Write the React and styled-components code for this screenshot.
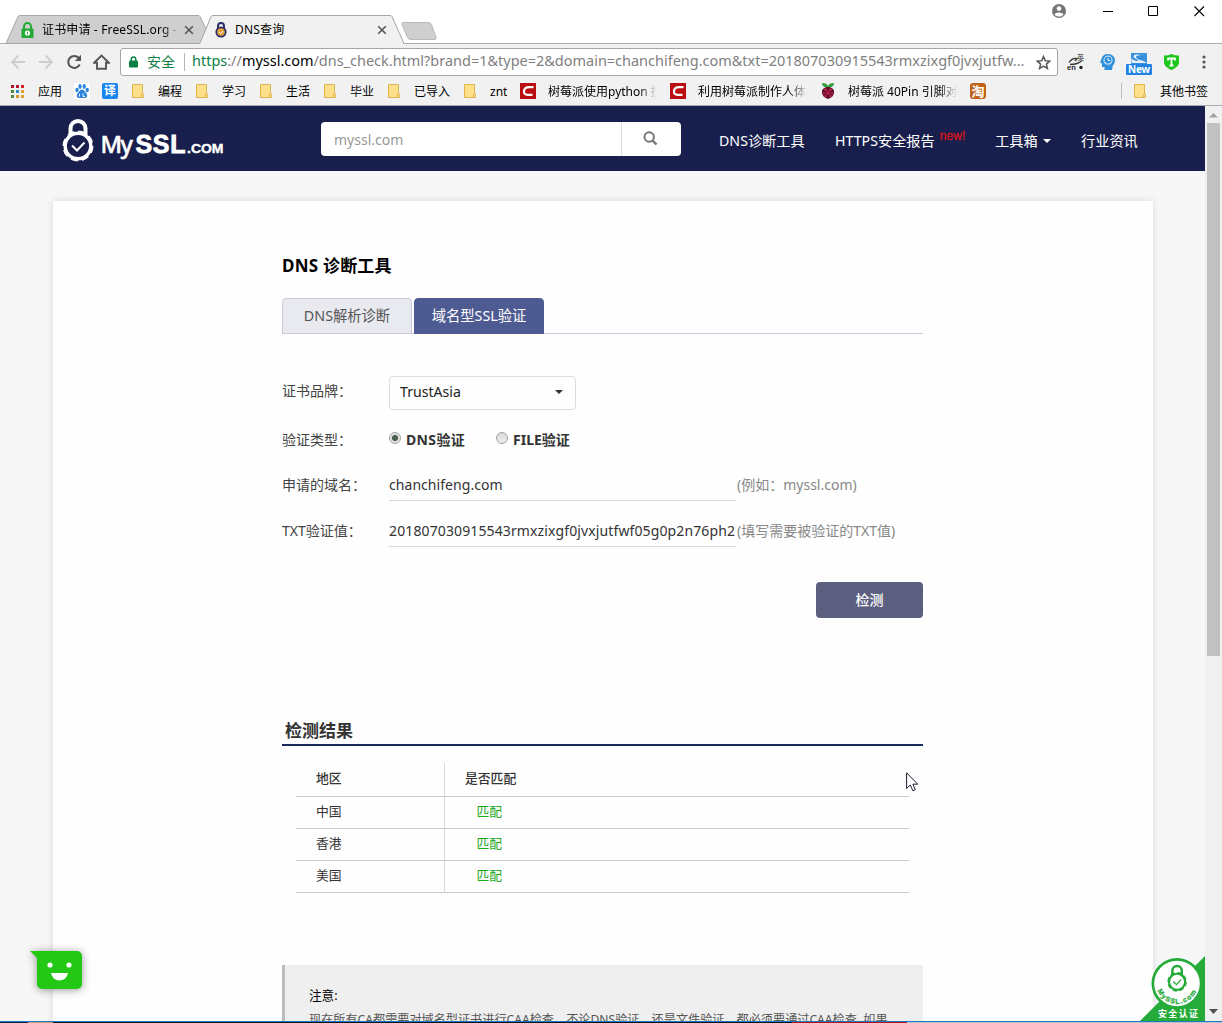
import React from "react";
import styled, { createGlobalStyle } from "styled-components";

const SANS = '"Noto Sans", "Noto Sans CJK SC", sans-serif';

const Global = createGlobalStyle`
  * { box-sizing: border-box; }
  body { margin: 0; overflow: hidden; font-family: ${SANS}; }
`;

/* ---------- window ---------- */
const Window = styled.div`
  width: 1222px;
  height: 1023px;
  display: flex;
  flex-direction: column;
  overflow: hidden;
  background: #fff;
  color: #333;
`;
const TabStrip = styled.div`
  height: 44px;
  flex: none;
  display: flex;
  align-items: flex-end;
  padding-left: 5px;
  border-bottom: 1px solid #b0b0b0;
`;
const BrowserTab = styled.div`
  position: relative;
  z-index: ${(p) => (p.$active ? 1 : 0)};
  width: ${(p) => p.$w}px;
  height: 29px;
  flex: none;
  margin: 0 0 -1px ${(p) => p.$shift || 0}px;
  padding: 1px ${(p) => (p.$active ? 18 : 14)}px 0 16px;
  display: flex;
  align-items: center;
`;
const TabShape = styled.svg`
  position: absolute;
  inset: 0;
  z-index: -1;
`;
const TabTitle = styled.div`
  flex: 1;
  min-width: 0;
  height: 18px;
  margin: 0 5px 0 8px;
  overflow: hidden;
  white-space: nowrap;
  font-size: 12px;
  line-height: 18px;
  letter-spacing: ${(p) => p.$ls || 0}px;
  color: #000;
  mask-image: ${(p) => (p.$fade ? "linear-gradient(90deg,#000 88%,transparent)" : "none")};
`;
const NewTab = styled.svg`
  flex: none;
  margin: 0 0 2px -5px;
`;
const WindowButtons = styled.div`
  margin-left: auto;
  align-self: flex-start;
  display: flex;
  align-items: center;
  height: 22px;
  padding-right: 17px;
`;
const WinIcon = styled.svg`
  flex: none;
  margin-left: ${(p) => p.$ml}px;
`;

const Toolbar = styled.div`
  height: 36px;
  flex: none;
  display: flex;
  align-items: center;
  background: #f1f1f1;
  padding-left: 10px;
`;
const ToolIcon = styled.svg`
  flex: none;
  margin-right: ${(p) => p.$mr}px;
`;
const Omnibox = styled.div`
  width: 938px;
  height: 28px;
  flex: none;
  display: flex;
  align-items: center;
  padding: 0 6px 0 8px;
  border: 1px solid #a5a5a5;
  border-radius: 3px;
  background: #fff;
`;
const Secure = styled.span`
  width: 37px;
  height: 18px;
  margin-left: 9px;
  border-right: 1px solid #b5b5b5;
  box-sizing: content-box;
  font-size: 14px;
  line-height: 17px;
  color: #0b8043;
`;
const Url = styled.span`
  flex: 1;
  margin-left: 7px;
  white-space: nowrap;
  overflow: hidden;
  font-size: 14.48px;
  line-height: 22px;
  padding-bottom: 2px;
  color: #808080;
`;
const UrlScheme = styled.span`color: #0b8043;`;
const UrlHost = styled.span`color: #000;`;
const Extensions = styled.div`
  display: flex;
  align-items: center;
  margin-left: 9px;
`;

const BookmarkBar = styled.div`
  height: 26px;
  flex: none;
  display: flex;
  align-items: center;
  padding: 0 0 3px 11px;
  border-bottom: 1px solid #a9a9b4;
  background: #f1f1f1;
`;
const Bookmark = styled.div`
  width: ${(p) => p.$w}px;
  height: 20px;
  flex: none;
  display: flex;
  align-items: center;
`;
const BookmarkText = styled.span`
  width: ${(p) => (p.$fade ? "109px" : "auto")};
  margin-left: ${(p) => p.$gap}px;
  padding-top: 2px;
  overflow: hidden;
  white-space: nowrap;
  font-size: 12px;
  line-height: 18px;
  color: #000;
  mask-image: ${(p) => (p.$fade ? "linear-gradient(90deg,#000 84%,transparent)" : "none")};
`;
const OtherBookmarks = styled.div`
  margin-left: auto;
  width: 101px;
  height: 16px;
  display: flex;
  align-items: center;
  padding-left: 12px;
  border-left: 1px solid #bbb;
`;
const TileIcon = styled.span`
  width: 16px;
  height: 16px;
  flex: none;
  display: flex;
  align-items: center;
  justify-content: center;
  border-radius: ${(p) => p.$r || 0}px;
  background: ${(p) => p.$bg};
  color: #fff;
  font-size: ${(p) => p.$fs || 12}px;
  font-weight: 700;
  line-height: 16px;
`;

/* ---------- page ---------- */
const Viewport = styled.div`
  position: relative;
  height: 915px;
  flex: none;
  display: flex;
  overflow: hidden;
`;
const Page = styled.div`
  width: 1205px;
  display: flex;
  flex-direction: column;
  background: #f7f7f7;
`;
const Header = styled.header`
  height: 65px;
  flex: none;
  display: flex;
  align-items: center;
  padding: 0 0 0 62px;
  background: #191f4c;
`;
const Logo = styled.svg`
  width: 164px;
  height: 46px;
  flex: none;
  margin-top: 3px;
`;
const Search = styled.div`
  width: 360px;
  height: 34px;
  flex: none;
  display: flex;
  margin: 1px 38px 0 95px;
  border-radius: 4px;
  background: #fff;
`;
const SearchInput = styled.div`
  width: 301px;
  padding-left: 13px;
  border-right: 1px solid #ddd;
  font-size: 14px;
  line-height: 35px;
  color: #999;
`;
const SearchButton = styled.div`
  flex: 1;
  display: flex;
  align-items: center;
  justify-content: center;
  padding: 0 2px 2px 0;
`;
const NavItem = styled.a`
  width: ${(p) => p.$w}px;
  flex: none;
  display: flex;
  align-items: center;
  padding-top: 4px;
  white-space: nowrap;
  font-size: 14.2px;
  line-height: 20px;
  color: #fff;
`;
const NewFlag = styled.sup`
  margin: -10px 0 0 5px;
  font-family: "Liberation Sans", Arial, sans-serif;
  font-size: 12px;
  line-height: 12px;
  letter-spacing: 0.1px;
  color: #d9131b;
  -webkit-text-stroke: 0.3px #d9131b;
`;
const Caret = styled.span`
  margin-left: ${(p) => p.$ml || 0}px;
  border: 4px solid transparent;
  border-top-color: ${(p) => p.$c};
  border-bottom: 0;
`;
const Card = styled.main`
  width: 1100px;
  flex: 1;
  margin: 30px 0 0 53px;
  padding: 53px 230px 0 229px;
  display: flex;
  flex-direction: column;
  background: #fefefe;
  box-shadow: 0 0 8px rgba(0, 0, 0, 0.12);
`;
const Title = styled.h1`
  margin: 0 0 21px;
  height: 23px;
  font-size: 17px;
  font-weight: 700;
  line-height: 23px;
  letter-spacing: 0.22px;
  color: #000;
`;
const Tabs = styled.div`
  height: 36px;
  flex: none;
  display: flex;
  gap: 2px;
  border-bottom: 1px solid #c9cadc;
`;
const PageTab = styled.div`
  width: 130px;
  height: 36px;
  border: 1px solid ${(p) => (p.$active ? "#4e5b93" : "#c9cadc")};
  border-radius: 4px 4px 0 0;
  background: ${(p) => (p.$active ? "#4e5b93" : "#e9eaf0")};
  color: ${(p) => (p.$active ? "#fff" : "#555")};
  text-align: center;
  font-size: 14.3px;
  line-height: 34px;
`;
const FormRow = styled.div`
  height: ${(p) => p.$h}px;
  flex: none;
  display: flex;
  align-items: flex-start;
  margin-top: ${(p) => p.$mt || 0}px;
`;
const Label = styled.label`
  width: 107px;
  flex: none;
  font-size: 14px;
  line-height: 30px;
  white-space: nowrap;
  color: #444;
`;
const Select = styled.div`
  width: 187px;
  height: 34px;
  display: flex;
  align-items: center;
  justify-content: space-between;
  padding: 0 12px 3px 10px;
  border: 1px solid #ddd;
  border-radius: 4px;
  font-size: 14.1px;
  line-height: 20px;
  color: #222;
`;
const RadioLabel = styled.div`
  width: 107px;
  display: flex;
  align-items: center;
  white-space: nowrap;
  font-size: 14px;
  font-weight: 700;
  line-height: 30px;
  letter-spacing: ${(p) => p.$ls || 0}px;
  color: #333;
`;
const Radio = styled.span`
  width: 12px;
  height: 12px;
  flex: none;
  margin: -4px 5px 0 0;
  border: 1px solid #a2a2a2;
  border-radius: 50%;
  background: ${(p) =>
    p.$on
      ? "radial-gradient(circle, #4c6152 0 2.6px, #e4e4e4 3.6px)"
      : "linear-gradient(#dcdcdc, #ededed)"};
`;
const Input = styled.div`
  width: 347px;
  height: 31px;
  flex: none;
  border-bottom: 1px solid #d8d8d8;
  white-space: nowrap;
  font-size: 14px;
  line-height: 30px;
  letter-spacing: ${(p) => p.$ls || 0}px;
  color: #333;
`;
const Hint = styled.span`
  margin-left: 1px;
  white-space: nowrap;
  font-size: 14px;
  line-height: 30px;
  color: #888;
`;
const Submit = styled.div`
  width: 107px;
  height: 36px;
  flex: none;
  align-self: flex-end;
  margin-top: 35px;
  border-radius: 4px;
  background: #5d5f80;
  color: #fff;
  text-align: center;
  font-size: 14px;
  font-weight: 500;
  line-height: 36px;
`;
const ResultTitle = styled.h2`
  height: 30px;
  flex: none;
  margin: 98px 0 17px;
  padding-left: 3px;
  border-bottom: 2px solid #1a2c5b;
  font-size: 17px;
  font-weight: 700;
  line-height: 29px;
  color: #333;
`;
const Table = styled.div`
  width: 613px;
  flex: none;
  margin-left: 14px;
  display: flex;
  flex-direction: column;
`;
const Row = styled.div`
  height: ${(p) => (p.$head ? 34 : 32)}px;
  display: grid;
  grid-template-columns: 149px 1fr;
  border-bottom: 1px solid #c8c8c8;
  font-size: 12.8px;
  font-weight: ${(p) => (p.$head ? 500 : 400)};
  line-height: ${(p) => (p.$head ? 31 : 29)}px;
  color: #333;
`;
const Cell = styled.div`
  padding-left: ${(p) => p.$pl}px;
  margin-bottom: -1px;
  border-right: ${(p) => (p.$line ? "1px solid #d8d8d8" : "0")};
  color: ${(p) => (p.$ok ? "#1aa91a" : "inherit")};
`;
const Notice = styled.section`
  height: 120px;
  flex: none;
  margin-top: 72px;
  padding: 19px 0 0 24px;
  border-left: 3px solid #bbb;
  background: #efefef;
  line-height: 24px;
  white-space: nowrap;
  color: #555;
`;
const NoticeHead = styled.div`
  font-size: 12.6px;
  color: #000;
`;
const NoticeText = styled.div`
  font-size: 12.15px;
`;
const Scrollbar = styled.div`
  width: 17px;
  flex: none;
  display: flex;
  flex-direction: column;
  align-items: center;
  padding: 7px 0;
  background: #f0f0f0;
`;
const Thumb = styled.div`
  width: 13px;
  height: 533px;
  margin: 5px 0 auto;
  background: #c1c1c1;
`;
const Floating = styled.svg`
  position: absolute;
  left: ${(p) => p.$x}px;
  top: ${(p) => p.$y}px;
`;
const ChatBubble = styled.path`
  fill: #22c814;
  filter: drop-shadow(0 1px 4px rgba(0, 0, 0, 0.4));
`;
const Taskbar = styled.div`
  height: 2px;
  flex: none;
  border-top: 1px solid #1f79bf;
  background: linear-gradient(90deg, #10243c 0 28px, #c49a7c 28px 53px, #0a1320 53px 792px, #b3121a 792px 907px, #b9c3cc 907px);
`;

const PadlockSeal = ({ color }) => (
  <g fill="none" stroke={color}>
    <path d="M8.5 17V10a7.500 7.500 0 0 1 15 0v7" strokeWidth="4" />
    <circle cx="16" cy="27.500" r="12.800" strokeWidth="3.400" />
    <circle cx="16" cy="27.500" r="14.200" strokeWidth="2.600" strokeDasharray="7 4.150" />
    <path d="M10 27l5 5 7.500-8" strokeWidth="2" />
  </g>
);
const CloseIcon = () => (
  <svg width="10" height="10" viewBox="0 0 10 10">
    <path d="M1.200 1.200l7.600 7.600M8.800 1.200L1.200 8.800" stroke="#555" strokeWidth="1.600" />
  </svg>
);
const Folder = () => (
  <svg width="13" height="16" viewBox="0 0 13 16">
    <path d="M.5 1.500h10v9.500l1 .5v3H.5z" fill="#fee08b" stroke="#e2b44e" />
    <path d="M9.500 14v-2.500l2-.5" fill="none" stroke="#e2b44e" />
  </svg>
);
const CIcon = () => (
  <svg width="16" height="16" viewBox="0 0 16 16">
    <path fill="#b90f12" d="M0 0h16v16H0z" />
    <path d="M13.500 4.200H9C6 4.200 4.300 5.800 4 8c-.3 2.400 1 3.900 3.800 3.900H12.500" fill="none" stroke="#fff" strokeWidth="2.200" />
  </svg>
);
const BerryIcon = () => (
  <svg width="14" height="16" viewBox="0 0 14 16">
    <path d="M1 0c3 0 5 .6 6 3C8 .6 10 0 13 0c0 3-2 4.500-6 4.500S1 3 1 0z" fill="#2f9e3b" />
    <path d="M7 4c4 0 6.500 2.500 6 6-.5 3.500-3.500 5-6 6-2.500-1-5.500-2.500-6-6C.5 6.500 3 4 7 4z" fill="#5a0d25" />
    <g fill="#b8204c"><circle cx="4.600" cy="6.800" r="1.600" /><circle cx="9.400" cy="6.800" r="1.600" /><circle cx="7" cy="10" r="1.900" /><circle cx="2.800" cy="10.200" r="1.300" /><circle cx="11.200" cy="10.200" r="1.300" /><circle cx="4.600" cy="13" r="1.200" /><circle cx="9.400" cy="13" r="1.200" /></g>
  </svg>
);

const folders = [["编程", 64], ["学习", 64], ["生活", 64], ["毕业", 64], ["已导入", 76], ["znt", 56]];
const rows = ["中国", "香港", "美国"];

export default function App() {
  return (
    <Window>
      <Global />
      <TabStrip>
        <BrowserTab $w={203}>
          <TabShape width="203" height="29">
            <path d="M1 28.500L13 1.500Q13.500 .5 15 .5H193Q194.500 .5 195 1.500L202 16V28.500z" fill="#cfcfcf" stroke="#a6a6a6" />
          </TabShape>
          <svg width="13" height="16" viewBox="0 0 13 16">
            <path d="M3 7V4.500a3.500 3.500 0 0 1 7 0V7" fill="none" stroke="#23a936" strokeWidth="2" />
            <rect x=".5" y="6.500" width="12" height="9.500" fill="#23a936" />
            <circle cx="6.500" cy="11" r="2.600" fill="#fff" /><path d="M6.500 9.800v2.500" stroke="#23a936" />
          </svg>
          <TabTitle $fade $ls={0.15}>证书申请 - FreeSSL.org - </TabTitle>
          <CloseIcon />
        </BrowserTab>
        <BrowserTab $active $w={206} $shift={-9}>
          <TabShape width="206" height="29">
            <path d="M0 28.500Q1 28.500 1.500 27L12 1.500Q12.500 .5 14 .5H191Q192.500 .5 193 1.500L205 28.500" fill="#f1f1f1" stroke="#a6a6a6" />
            <path d="M1 28.500H204" stroke="#f1f1f1" />
          </TabShape>
          <svg width="12" height="16" viewBox="0 0 12 16">
            <path d="M3 7V4a3 3 0 0 1 6 0V7" fill="none" stroke="#2b2f68" strokeWidth="2" />
            <circle cx="6" cy="10" r="4.700" fill="#e9a23b" stroke="#2b2f68" strokeWidth="1.800" />
            <path d="M4 10l1.500 1.500L8 9" fill="none" stroke="#fff" />
          </svg>
          <TabTitle $ls={0.2}>DNS查询</TabTitle>
          <CloseIcon />
        </BrowserTab>
        <NewTab width="38" height="19" viewBox="0 0 38 19">
          <path d="M3 .5H28.500Q30.500 .5 31.500 2.500L36 15.500Q36.500 17.500 35 17.500H11Q8.500 17.500 7.500 15.500L2 2.500Q1.500 .5 3 .5z" fill="#cfcfcf" stroke="#b9b9b9" />
        </NewTab>
        <WindowButtons>
          <WinIcon $ml={0} width="14" height="14" viewBox="0 0 14 14">
            <circle cx="7" cy="7" r="7" fill="#757575" /><circle cx="7" cy="4.600" r="2.300" fill="#fff" /><path d="M2.500 10.500c1-2.700 8-2.700 9 0-2 2.700-7 2.700-9 0z" fill="#fff" />
          </WinIcon>
          <WinIcon $ml={37} width="11" height="11"><path d="M0 5.500h10" stroke="#000" /></WinIcon>
          <WinIcon $ml={34} width="11" height="11"><path d="M.5 .5h9v9h-9z" fill="none" stroke="#000" /></WinIcon>
          <WinIcon $ml={35} width="11" height="11"><path d="M.5 .5l9.500 9.500M10 .5L.5 10" stroke="#000" strokeWidth="1.100" /></WinIcon>
        </WindowButtons>
      </TabStrip>

      <Toolbar>
        <ToolIcon $mr={12} width="16" height="16"><path d="M15 8H2.500M8.500 1.500L2 8l6.500 6.500" fill="none" stroke="#ccc" strokeWidth="1.800" /></ToolIcon>
        <ToolIcon $mr={12} width="16" height="16"><path d="M1 8h12.500M7.500 1.500L14 8l-6.500 6.500" fill="none" stroke="#ccc" strokeWidth="1.800" /></ToolIcon>
        <ToolIcon $mr={11} width="16" height="16"><path d="M13.700 10.500A6 6 0 1 1 12.800 4" fill="none" stroke="#555" strokeWidth="2" /><path d="M15 .8V7H8.800z" fill="#555" /></ToolIcon>
        <ToolIcon $mr={10} width="17" height="16"><path d="M1.200 8.700L8.500 1.500l7.300 7.200H13V14.800H4V8.700z" fill="none" stroke="#555" strokeWidth="1.900" /></ToolIcon>
        <Omnibox>
          <svg width="9" height="12" viewBox="0 0 9 12"><path d="M2.200 5V3.300a2.300 2.300 0 0 1 4.600 0V5" fill="none" stroke="#0b8043" strokeWidth="1.400" /><rect y="4.600" width="9" height="7" rx="1" fill="#0b8043" /></svg>
          <Secure>安全</Secure>
          <Url>
            <UrlScheme>https</UrlScheme>://<UrlHost>myssl.com</UrlHost>/dns_check.html?brand=1&amp;type=2&amp;domain=chanchifeng.com&amp;txt=201807030915543rmxzixgf0jvxjutfw...
          </Url>
          <svg width="15" height="15" viewBox="0 0 15 15"><path d="M7.500 1.500l1.800 4.200 4.500.4-3.400 3 1 4.400-3.900-2.300-3.900 2.300 1-4.400-3.400-3 4.500-.4z" fill="none" stroke="#555" strokeWidth="1.500" /></svg>
        </Omnibox>
        <Extensions>
          <ToolIcon $mr={15} width="18" height="18" viewBox="0 0 18 18">
            <path d="M2 9.500C4 6.500 7 5 10 5.500L8 8M3 11.500c5 0 9-1 12-4" fill="none" stroke="#333" strokeWidth="1.300" />
            <text x="0" y="17" fontFamily="Liberation Sans" fontSize="7.500" fontWeight="700" fill="#222">en</text>
            <text x="10" y="7" fontFamily="Noto Sans CJK SC" fontSize="7" fill="#333">英</text><circle cx="14" cy="14.500" r="1.700" fill="#222" />
          </ToolIcon>
          <ToolIcon $mr={11} width="15" height="16" viewBox="0 0 15 16">
            <path d="M8 0c4.500 0 7 3 7 6.500 0 3-2 4.500-2.500 6L12 16H4.500v-3H2V9.500L0 8.500 1.500 5C2 2 4.500 0 8 0z" fill="#2f8fd8" />
            <circle cx="8" cy="6.200" r="4" fill="none" stroke="#bfe0f7" strokeWidth="1.200" /><path d="M8 4v2.500h2" fill="none" stroke="#fff" />
          </ToolIcon>
          <ToolIcon $mr={12} width="26" height="26" viewBox="0 0 26 26">
            <path fill="#3a8fdc" d="M5 4h16v11H5z" /><path d="M20 6C12 5.500 8 7 11 9.500s7 1.500 9.500 4.500H5.500V9C8 13 14 12 12 11S5 8 9 5.500z" fill="#e6f1fb" />
            <rect y="15" width="26" height="11" rx="1" fill="#2184e4" />
            <text x="13" y="24" textAnchor="middle" textLength="22" fontFamily="Noto Sans" fontSize="10" fontWeight="700" fill="#fff">New</text>
          </ToolIcon>
          <ToolIcon $mr={23} width="15" height="16" viewBox="0 0 15 16">
            <path d="M0 1.500Q5 1.500 7.500 0 10 1.500 15 1.500V8c0 4-4 6.500-7.500 8C4 14.500 0 12 0 8z" fill="#1ec71a" /><path d="M3.500 4.500h8M4 4v2.500M11 4v2.500M7.500 4.500V11.500M5.500 11.500h4" stroke="#fff" strokeWidth="1.800" />
          </ToolIcon>
          <svg width="4" height="14" fill="#555"><circle cx="2" cy="2" r="1.600" /><circle cx="2" cy="7" r="1.600" /><circle cx="2" cy="12" r="1.600" /></svg>
        </Extensions>
      </Toolbar>

      <BookmarkBar>
        <Bookmark $w={63}>
          <svg width="13" height="13">
            {["#b3122c", "#b3122c", "#d2222a", "#4d8c3a", "#2f87c8", "#e0a030", "#4d8c3a", "#d99a2b", "#e0a030"].map((c, i) => (
              <rect key={i} x={(i % 3) * 5} y={Math.floor(i / 3) * 5} width="3" height="3" fill={c} />
            ))}
          </svg>
          <BookmarkText $gap={14}>应用</BookmarkText>
        </Bookmark>
        <Bookmark $w={28}>
          <svg width="16" height="16" viewBox="0 0 16 16"><path fill="#fff" d="M0 0h16v16H0z" /><g fill="#2a84e0"><ellipse cx="3" cy="7" rx="1.700" ry="2.300" /><ellipse cx="6" cy="3.500" rx="1.600" ry="2.400" /><ellipse cx="10.200" cy="3.500" rx="1.600" ry="2.400" /><ellipse cx="13.200" cy="7" rx="1.700" ry="2.300" /><path d="M8 6.500c2 0 2.500 2 4 3.500 2 2 1.500 5-1 5H5c-2.500 0-3-3-1-5C5.500 8.500 6 6.500 8 6.500z" /></g><path d="M5.500 11v2.500M9 10.500v3h2" stroke="#fff" fill="none" /></svg>
        </Bookmark>
        <Bookmark $w={30}><TileIcon $bg="#1a86f0" $r={2}>译</TileIcon></Bookmark>
        {folders.map(([name, w]) => (
          <Bookmark key={name} $w={w}><Folder /><BookmarkText $gap={13}>{name}</BookmarkText></Bookmark>
        ))}
        <Bookmark $w={150}><CIcon /><BookmarkText $gap={12} $fade>树莓派使用python 控</BookmarkText></Bookmark>
        <Bookmark $w={151}><CIcon /><BookmarkText $gap={12} $fade>利用树莓派制作人体</BookmarkText></Bookmark>
        <Bookmark $w={149}><BerryIcon /><BookmarkText $gap={13} $fade>树莓派 40Pin 引脚对</BookmarkText></Bookmark>
        <TileIcon $bg="#c0621a" $r={3} $fs={13}>淘</TileIcon>
        <OtherBookmarks><Folder /><BookmarkText $gap={13}>其他书签</BookmarkText></OtherBookmarks>
      </BookmarkBar>

      <Viewport>
        <Page>
          <Header>
            <Logo viewBox="0 0 164 46">
              <g transform="translate(0 1.500)"><PadlockSeal color="#fff" /></g>
              <g fill="#fff" stroke="#fff">
                <text x="38.500" y="35.500" fontFamily="Noto Sans" fontSize="23.500" fontWeight="500" strokeWidth=".5" textLength="32.500">My</text>
                <text x="73.500" y="35.500" fontFamily="Liberation Sans" fontSize="25" fontWeight="700" strokeWidth=".8" textLength="50">SSL</text>
                <text x="125" y="35.500" fontFamily="Liberation Sans" fontSize="13" fontWeight="700" strokeWidth=".4" textLength="36.500" lengthAdjust="spacingAndGlyphs">.COM</text>
              </g>
            </Logo>
            <Search>
              <SearchInput>myssl.com</SearchInput>
              <SearchButton>
                <svg width="15" height="15"><circle cx="6.200" cy="6" r="4.700" fill="none" stroke="#777" strokeWidth="2" /><path d="M9.500 9.500l4 4" stroke="#777" strokeWidth="2.400" /></svg>
              </SearchButton>
            </Search>
            <NavItem $w={116}>DNS诊断工具</NavItem>
            <NavItem $w={160}>HTTPS安全报告<NewFlag>new!</NewFlag></NavItem>
            <NavItem $w={86}>工具箱<Caret $c="#fff" $ml={5} /></NavItem>
            <NavItem $w={80}>行业资讯</NavItem>
          </Header>
          <Card>
            <Title>DNS 诊断工具</Title>
            <Tabs>
              <PageTab>DNS解析诊断</PageTab>
              <PageTab $active>域名型SSL验证</PageTab>
            </Tabs>
            <FormRow $mt={42} $h={49}>
              <Label>证书品牌：</Label>
              <Select>TrustAsia<Caret $c="#333" /></Select>
            </FormRow>
            <FormRow $h={45}>
              <Label>验证类型：</Label>
              <RadioLabel $ls={0.35}><Radio $on />DNS验证</RadioLabel>
              <RadioLabel><Radio />FILE验证</RadioLabel>
            </FormRow>
            <FormRow $h={46}>
              <Label>申请的域名：</Label>
              <Input $ls={0.05}>chanchifeng.com</Input>
              <Hint>(例如：myssl.com)</Hint>
            </FormRow>
            <FormRow $h={31}>
              <Label>TXT验证值：</Label>
              <Input $ls={0.12}>201807030915543rmxzixgf0jvxjutfwf05g0p2n76ph2</Input>
              <Hint>(填写需要被验证的TXT值)</Hint>
            </FormRow>
            <Submit>检测</Submit>
            <ResultTitle>检测结果</ResultTitle>
            <Table>
              <Row $head><Cell $pl={20} $line>地区</Cell><Cell $pl={20}>是否匹配</Cell></Row>
              {rows.map((r) => (
                <Row key={r}><Cell $pl={20} $line>{r}</Cell><Cell $pl={31.5} $ok>匹配</Cell></Row>
              ))}
            </Table>
            <Notice>
              <NoticeHead>注意:</NoticeHead>
              <NoticeText>现在所有CA都需要对域名型证书进行CAA检查，不论DNS验证，还是文件验证，都必须要通过CAA检查, 如果</NoticeText>
            </Notice>
          </Card>
        </Page>
        <Scrollbar>
          <svg width="9" height="5"><path d="M0 4.500L4.500 0 9 4.500z" fill="#a3a3a3" /></svg>
          <Thumb />
          <svg width="9" height="5"><path d="M0 0h9L4.500 5z" fill="#505050" /></svg>
        </Scrollbar>

        <Floating $x={18} $y={833} width="80" height="66" viewBox="0 0 80 66">
          <ChatBubble d="M12 12H59a5 5 0 0 1 5 5V45a5 5 0 0 1-5 5H24a5 5 0 0 1-5-5V19z" />
          <circle cx="32" cy="26" r="2.600" fill="#fff" /><circle cx="51" cy="26" r="2.600" fill="#fff" />
          <path d="M33 34H50C49 38.500 46 41.500 41.500 41.500S34 38.500 33 34z" fill="#fff" />
        </Floating>
        <Floating $x={1140} $y={850} width="65" height="65" viewBox="0 0 65 65">
          <defs><path id="sealArc" d="M16 29.500A21.200 21.200 0 0 0 58 29.500" /></defs>
          <path d="M65 0V65H0z" fill="#25ab39" />
          <circle cx="37" cy="27.500" r="25.500" fill="#25ab39" /><circle cx="37" cy="27.500" r="22.800" fill="#fff" />
          <g transform="translate(27 8.500) scale(.63)"><PadlockSeal color="#25ab39" /></g>
          <text fontFamily="Liberation Sans" fontSize="7" fontWeight="700" fill="#25ab39" stroke="#25ab39" strokeWidth=".3" letterSpacing="1.100"><textPath href="#sealArc" startOffset="50%" textAnchor="middle">MySSL.com</textPath></text>
          <text x="18" y="61" fontFamily="Noto Sans CJK SC" fontSize="9" fontWeight="700" fill="#fff" textLength="40">安全认证</text>
        </Floating>
        <Floating $x={906} $y={666} width="13" height="20" viewBox="0 0 13 20">
          <path d="M.6 .8V16.500L4.200 13 7 18.800 9.300 17.700 6.900 12.200H11.700z" fill="#fff" stroke="#1c1c30" strokeWidth="1" />
        </Floating>
      </Viewport>
      <Taskbar />
    </Window>
  );
}
